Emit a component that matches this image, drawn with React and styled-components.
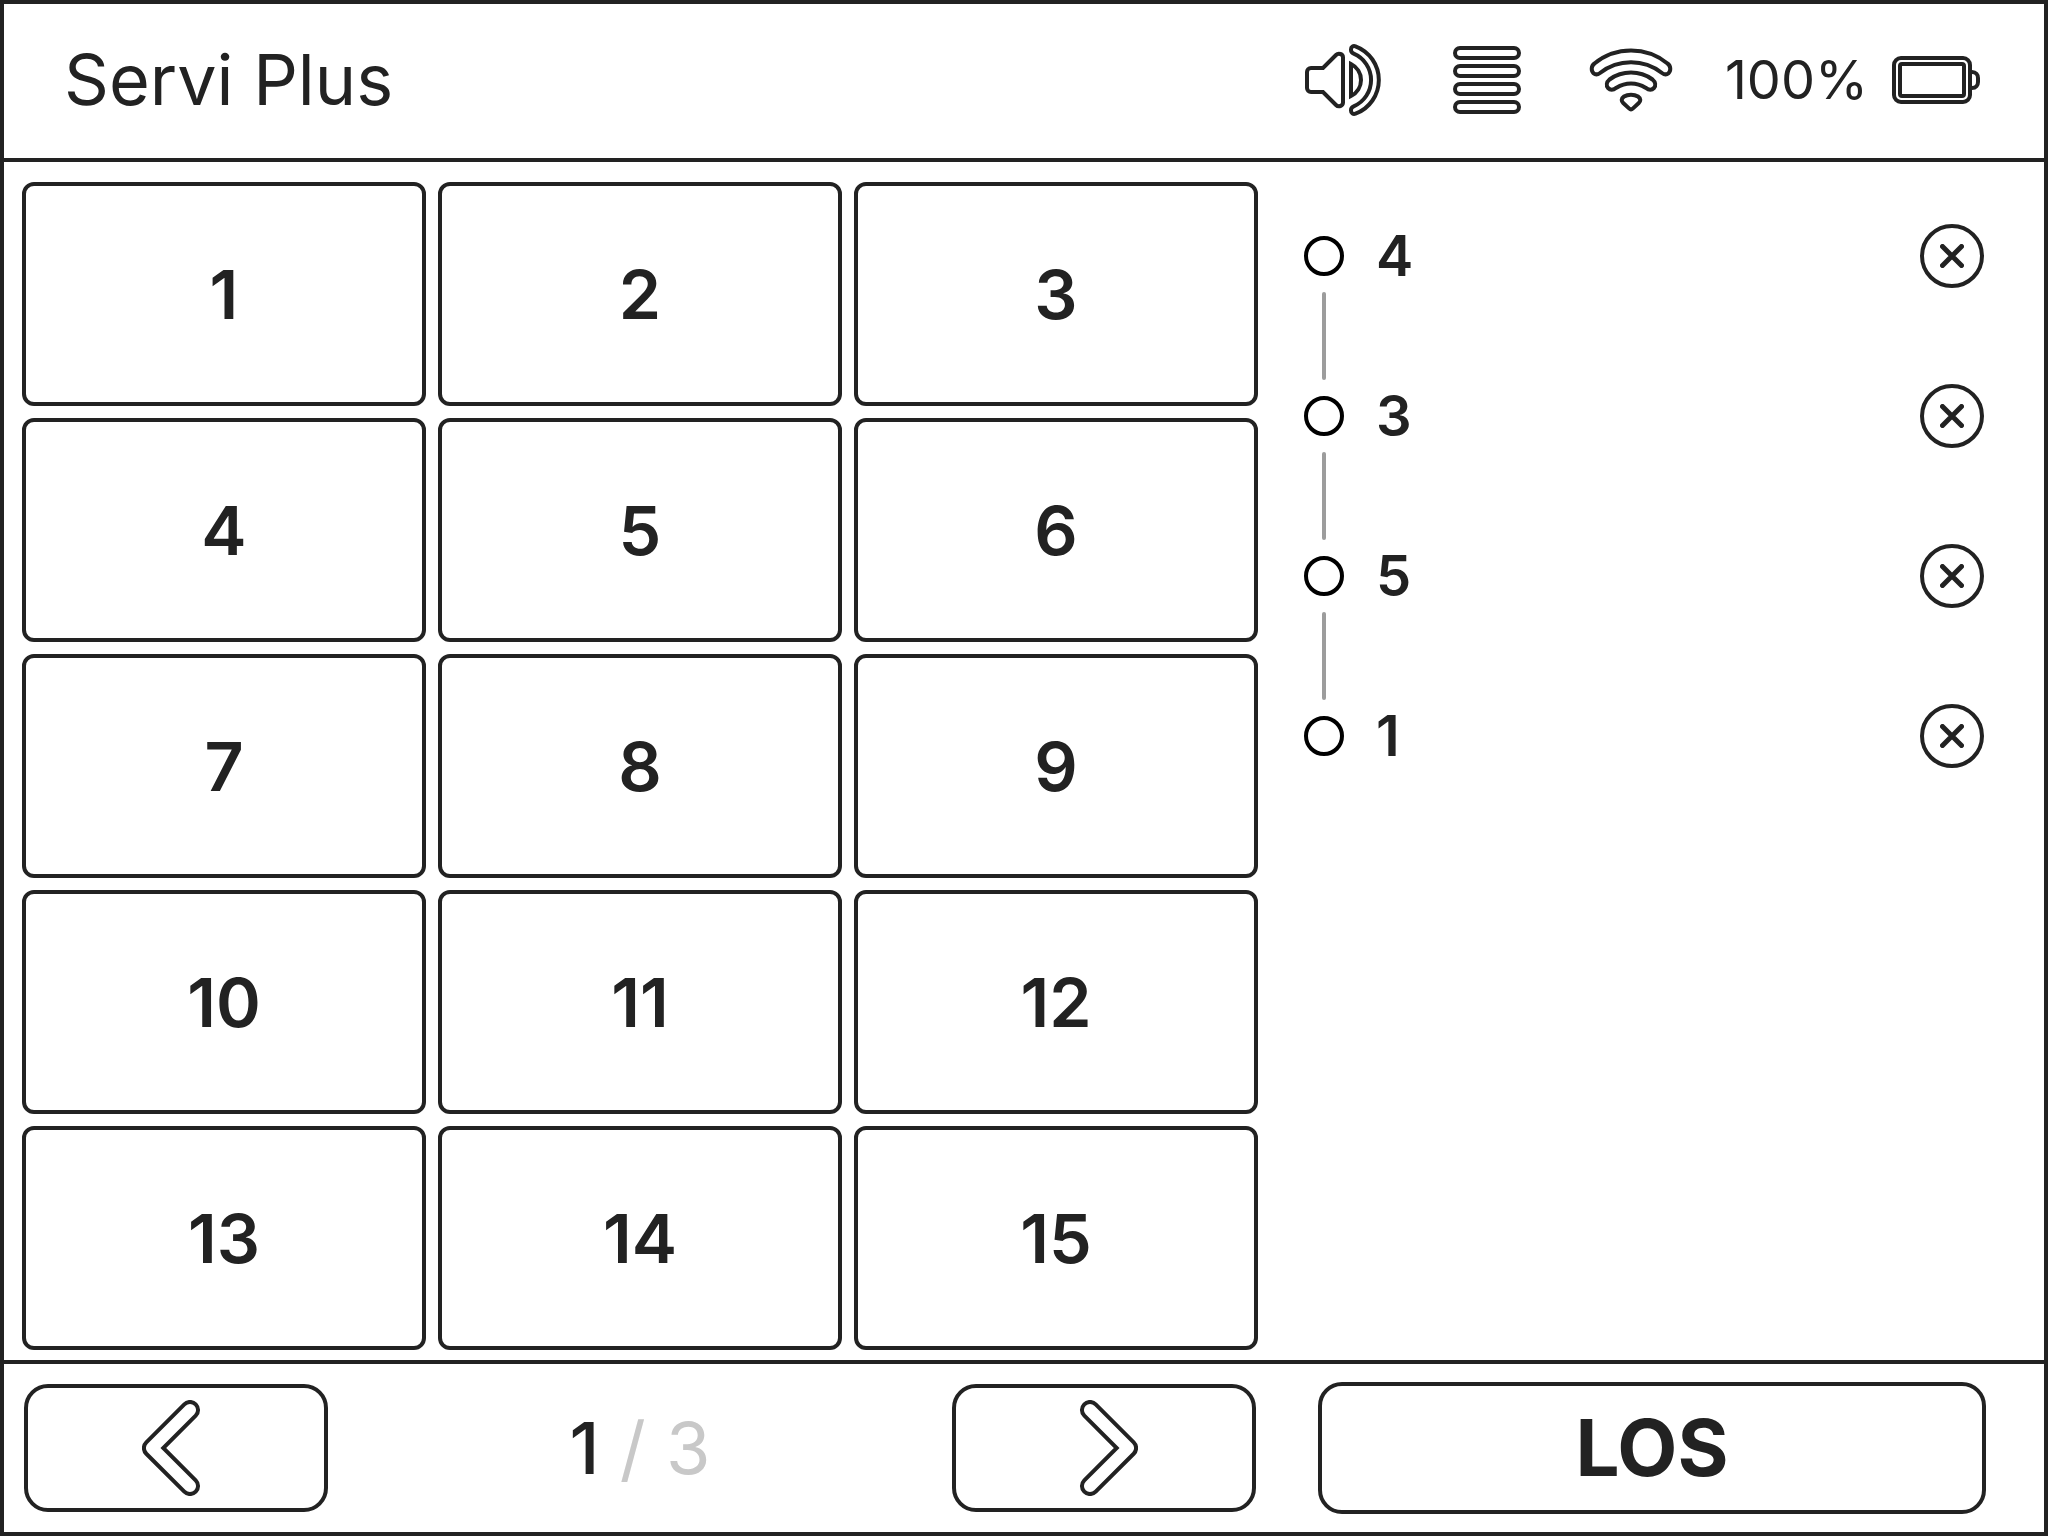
import { useState } from "react";
import styled, { createGlobalStyle } from "styled-components";

const GlobalStyle = createGlobalStyle`
  * {
    box-sizing: border-box;
  }

  body {
    margin: 0;
    background: #fff;
    color: #222;
    font-family: Inter, Roboto, sans-serif;
  }

  button {
    padding: 0;
    border: 4px solid #222;
    background: #fff;
    color: inherit;
    font-family: inherit;
    cursor: pointer;
  }

  svg {
    display: block;
    fill: none;
    stroke: #222;
    stroke-width: 4;
  }
`;

const Screen = styled.div`
  min-height: 100vh;
  display: grid;
  grid-template-rows: auto 1fr auto;
  border: 4px solid #222;
`;

const Header = styled.header`
  display: flex;
  align-items: center;
  justify-content: space-between;
  height: 158px;
  padding: 0 64px 2px 60px;
  border-bottom: 4px solid #222;
`;

const Title = styled.h1`
  margin: 0;
  font-size: 70px;
  line-height: 80px;
  font-weight: 400;
`;

const StatusBar = styled.div`
  display: flex;
  align-items: center;
  gap: 52px;
`;

const StatusIcons = styled.div`
  display: flex;
  align-items: center;
  gap: 68px;
`;

const Battery = styled.div`
  display: flex;
  align-items: center;
  gap: 24px;
  font-size: 54px;
  line-height: 64px;
`;

const Columns = styled.div`
  display: grid;
  grid-template-columns: minmax(0, 209fr) minmax(0, 131fr);
`;

const Keypad = styled.main`
  display: grid;
  grid-template-columns: repeat(3, 1fr);
  grid-auto-rows: 1fr;
  gap: 12px;
  padding: 20px 0 10px 18px;
`;

const TableButton = styled.button`
  min-height: 96px;
  border-radius: 12px;
  font-size: 68px;
  line-height: 80px;
  font-weight: 600;
`;

const Route = styled.ol`
  margin: 0;
  padding: 14px 60px 0 46px;
  list-style: none;
`;

const Stop = styled.li`
  display: grid;
  grid-template-columns: 40px 1fr 64px;
  column-gap: 32px;
  align-items: center;
  height: 160px;
`;

const Rail = styled.div`
  align-self: start;
  display: flex;
  flex-direction: column;
  align-items: center;
  gap: 16px;
  height: 160px;
  padding-top: 60px;
`;

const Dot = styled.span`
  flex: 0 0 40px;
  width: 40px;
  border: 4px solid #000;
  border-radius: 50%;
`;

const Connector = styled.span`
  flex: 0 0 88px;
  width: 4px;
  border-radius: 2px;
  background: #9c9c9c;
`;

const StopName = styled.span`
  font-size: 56px;
  line-height: 64px;
  font-weight: 600;
`;

const RemoveButton = styled.button`
  display: grid;
  place-items: center;
  width: 64px;
  height: 64px;
  border-radius: 50%;
`;

const Footer = styled.footer`
  display: grid;
  grid-template-columns: minmax(0, 209fr) minmax(0, 131fr);
  align-items: center;
  height: 172px;
  border-top: 4px solid #222;
`;

const Pager = styled.nav`
  display: flex;
  align-items: center;
  justify-content: space-between;
  padding: 0 2px 0 20px;
`;

const PageButton = styled.button`
  display: grid;
  place-items: center;
  width: 304px;
  height: 128px;
  border-radius: 24px;
`;

const PageCount = styled.p`
  margin: 0;
  font-size: 72px;
  line-height: 80px;
  color: #c8c8c8;
`;

const CurrentPage = styled.span`
  color: #222;
  font-weight: 500;
`;

const GoArea = styled.div`
  padding: 0 58px 0 60px;
`;

const GoButton = styled.button`
  width: 100%;
  height: 132px;
  border-radius: 24px;
  font-size: 78px;
  line-height: 96px;
  font-weight: 700;
`;

const VolumeIcon = () => (
  <svg width="80" height="72" viewBox="0 0 80 72" role="img" aria-label="Volume">
    <path d="M6 24H18L31 11C33.5 8.5 38 10 38 13.5V58.5C38 62 33.5 63.5 31 61L18 48H6a4 4 0 0 1-4-4V28a4 4 0 0 1 4-4Z" />
    <path d="M46 20A17.8 17.8 0 0 1 46 52Z" />
    <path d="M50.5 2.3A36 36 0 0 1 50.5 69.7C48 70.6 46 69 46 66.8V66C46 64 47 63 48.7 62.3A28.6 28.6 0 0 0 48.7 9.7C47 9 46 8 46 6V5.2C46 3 48 1.4 50.5 2.3Z" />
  </svg>
);

const TraysIcon = () => (
  <svg width="68" height="68" viewBox="0 0 68 68" role="img" aria-label="Trays">
    {[2, 20, 38, 56].map((y) => (
      <rect key={y} x="2" y={y} width="64" height="10" rx="5" />
    ))}
  </svg>
);

const WifiIcon = () => (
  <svg width="84" height="64" viewBox="0 0 84 64" role="img" aria-label="Wi-Fi">
    <path d="M5.5 15.5A58 58 0 0 1 78.5 15.5C82 18 82 23 79.5 25.2C77.5 27 75 26.5 73 25A50 50 0 0 0 11 25C9 26.5 6.5 27 4.5 25.2C2 23 2 18 5.5 15.5Z" />
    <path d="M20.5 31.5A37 37 0 0 1 63.5 31.5C66.5 34 67 37.5 65 40C62.8 42.3 59.5 42 56.5 39.7A27 27 0 0 0 27.5 39.7C24.5 42 21.2 42.3 19 40C17 37.5 17.5 34 20.5 31.5Z" />
    <path d="M35 48.5C39 46 45 46 49 48.5C52 50.5 51.8 53.2 49.8 55L44 60.4C42.8 61.5 41.2 61.5 40 60.4L34.2 55C32.2 53.2 32 50.5 35 48.5Z" />
  </svg>
);

const BatteryIcon = () => (
  <svg width="88" height="48" viewBox="0 0 88 48" aria-hidden="true">
    <rect x="2" y="2" width="76" height="44" rx="7" />
    <rect x="8" y="8" width="64" height="32" rx="2" />
    <path d="M78 16H80C84 16 86 19 86 22V26C86 29 84 32 80 32H78" />
  </svg>
);

const PrevIcon = () => (
  <svg width="68" height="96" viewBox="0 0 68 96" aria-hidden="true">
    <path d="M42.3 4.3L4.3 42.3a8 8 0 0 0 0 11.4L42.3 91.7a8 8 0 0 0 11.4-11.4L21.3 48L53.7 15.7a8 8 0 0 0-11.4-11.4Z" />
  </svg>
);

const NextIcon = () => (
  <svg width="68" height="96" viewBox="0 0 68 96" aria-hidden="true">
    <path d="M25.7 4.3L63.7 42.3a8 8 0 0 1 0 11.4L25.7 91.7a8 8 0 0 1-11.4-11.4L46.7 48L14.3 15.7a8 8 0 0 1 11.4-11.4Z" />
  </svg>
);

const RemoveIcon = () => (
  <svg width="24" height="24" viewBox="0 0 24 24" aria-hidden="true">
    <path d="M2.5 2.5L21.5 21.5M21.5 2.5L2.5 21.5" strokeWidth="5" strokeLinecap="round" />
  </svg>
);

const PAGE_SIZE = 15;
const PAGES = 3;

const App = () => {
  const [page, setPage] = useState(1);
  const [stops, setStops] = useState([4, 3, 5, 1]);

  const tables = Array.from(
    { length: PAGE_SIZE },
    (_, i) => (page - 1) * PAGE_SIZE + i + 1
  );

  return (
    <>
      <GlobalStyle />
      <Screen>
        <Header>
          <Title>Servi Plus</Title>
          <StatusBar>
            <StatusIcons>
              <VolumeIcon />
              <TraysIcon />
              <WifiIcon />
            </StatusIcons>
            <Battery>
              <span>100%</span>
              <BatteryIcon />
            </Battery>
          </StatusBar>
        </Header>
        <Columns>
          <Keypad>
            {tables.map((table) => (
              <TableButton
                key={table}
                type="button"
                onClick={() => setStops([...stops, table])}
              >
                {table}
              </TableButton>
            ))}
          </Keypad>
          <Route>
            {stops.map((stop, i) => (
              <Stop key={i}>
                <Rail>
                  <Dot />
                  {i < stops.length - 1 && <Connector />}
                </Rail>
                <StopName>{stop}</StopName>
                <RemoveButton
                  type="button"
                  aria-label={`${stop} entfernen`}
                  onClick={() => setStops(stops.filter((_, n) => n !== i))}
                >
                  <RemoveIcon />
                </RemoveButton>
              </Stop>
            ))}
          </Route>
        </Columns>
        <Footer>
          <Pager>
            <PageButton
              type="button"
              aria-label="Zurück"
              onClick={() => setPage(Math.max(1, page - 1))}
            >
              <PrevIcon />
            </PageButton>
            <PageCount>
              <CurrentPage>{page}</CurrentPage> / {PAGES}
            </PageCount>
            <PageButton
              type="button"
              aria-label="Weiter"
              onClick={() => setPage(Math.min(PAGES, page + 1))}
            >
              <NextIcon />
            </PageButton>
          </Pager>
          <GoArea>
            <GoButton type="button">LOS</GoButton>
          </GoArea>
        </Footer>
      </Screen>
    </>
  );
};

export default App;
